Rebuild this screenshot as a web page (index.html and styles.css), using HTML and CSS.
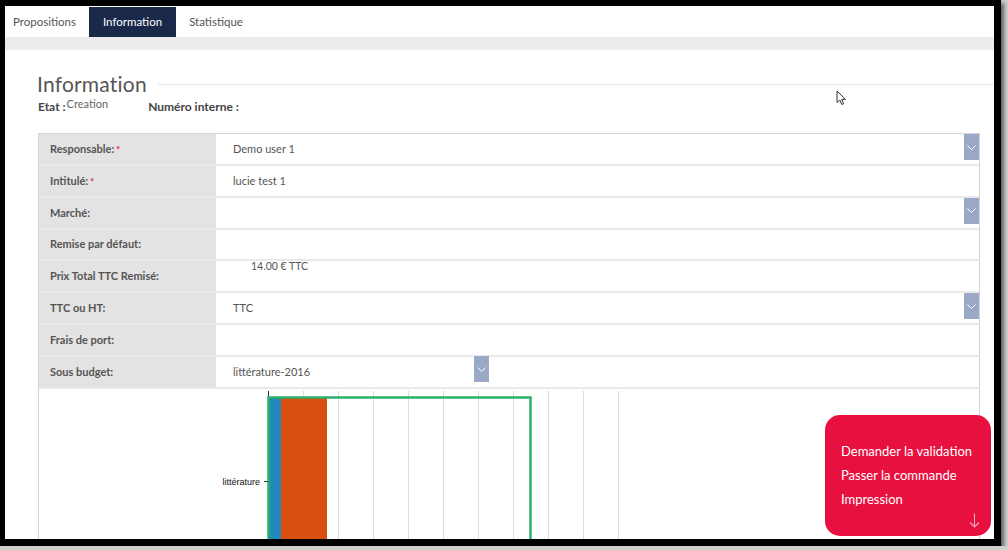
FILE: index.html
```html
<!DOCTYPE html>
<html lang="fr">
<head>
  <meta charset="UTF-8">
  <title>Information</title>
  <link rel="stylesheet" href="styles.css">
</head>
<body>
<div class="frame">
  <div class="page">
    <div class="tabs">
      <div class="tab first">Propositions</div>
      <div class="tab active">Information</div>
      <div class="tab">Statistique</div>
    </div>
    <div class="strip"></div>

    <div class="content">
      <div class="heading">
        <h1>Information</h1>
        <div class="rule"></div>
      </div>
      <div class="meta">
        <strong>Etat :</strong><span class="state">Creation</span>
        <strong class="num">Numéro interne :</strong>
      </div>

      <div class="form-table">
        <div class="row">
          <div class="label">Responsable: <span class="req">*</span></div>
          <div class="value">Demo user 1
            <span class="arrow"><svg width="9" height="5" viewBox="0 0 9 5"><polyline points="0.5,0.5 4.5,4.5 8.5,0.5" fill="none" stroke="#fff" stroke-width="1"/></svg></span>
          </div>
        </div>
        <div class="row">
          <div class="label">Intitulé: <span class="req">*</span></div>
          <div class="value">lucie test 1</div>
        </div>
        <div class="row">
          <div class="label">Marché:</div>
          <div class="value">
            <span class="arrow"><svg width="9" height="5" viewBox="0 0 9 5"><polyline points="0.5,0.5 4.5,4.5 8.5,0.5" fill="none" stroke="#fff" stroke-width="1"/></svg></span>
          </div>
        </div>
        <div class="row">
          <div class="label">Remise par défaut:</div>
          <div class="value"></div>
        </div>
        <div class="row">
          <div class="label">Prix Total TTC Remisé:</div>
          <div class="value top"><span class="price">14.00 € TTC</span></div>
        </div>
        <div class="row">
          <div class="label">TTC ou HT:</div>
          <div class="value">TTC
            <span class="arrow"><svg width="9" height="5" viewBox="0 0 9 5"><polyline points="0.5,0.5 4.5,4.5 8.5,0.5" fill="none" stroke="#fff" stroke-width="1"/></svg></span>
          </div>
        </div>
        <div class="row">
          <div class="label">Frais de port:</div>
          <div class="value"></div>
        </div>
        <div class="row">
          <div class="label">Sous budget:</div>
          <div class="value">
            <div class="small-select">littérature-2016
              <span class="arrow"><svg width="9" height="5" viewBox="0 0 9 5"><polyline points="0.5,0.5 4.5,4.5 8.5,0.5" fill="none" stroke="#fff" stroke-width="1"/></svg></span>
            </div>
          </div>
        </div>

        <div class="chart">
          <svg width="940" height="220" viewBox="0 0 940 220">
            <g stroke="#dcdcdc" stroke-width="1">
              <line x1="264.5" y1="2" x2="264.5" y2="220"/>
              <line x1="299.5" y1="2" x2="299.5" y2="220"/>
              <line x1="334.5" y1="2" x2="334.5" y2="220"/>
              <line x1="369.5" y1="2" x2="369.5" y2="220"/>
              <line x1="404.5" y1="2" x2="404.5" y2="220"/>
              <line x1="439.5" y1="2" x2="439.5" y2="220"/>
              <line x1="474.5" y1="2" x2="474.5" y2="220"/>
              <line x1="509.5" y1="2" x2="509.5" y2="220"/>
              <line x1="544.5" y1="2" x2="544.5" y2="220"/>
              <line x1="579.5" y1="2" x2="579.5" y2="220"/>
            </g>
            <line x1="229.5" y1="2" x2="229.5" y2="220" stroke="#333" stroke-width="1"/>
            <rect x="229" y="9" width="13" height="211" fill="#2389b9"/>
            <rect x="242" y="9" width="46" height="211" fill="#d94f10"/>
            <rect x="229.5" y="8.5" width="262" height="220" fill="none" stroke="#2ab06a" stroke-width="2.5"/>
            <line x1="225" y1="92.5" x2="229" y2="92.5" stroke="#333" stroke-width="1"/>
            <text x="221" y="95.5" text-anchor="end" class="axis-label">littérature</text>
          </svg>
        </div>
      </div>
    </div>

    <svg class="cursor" width="11" height="16" viewBox="0 0 11 16">
      <path d="M1 1 L1 12.5 L3.8 10 L5.8 14.5 L7.6 13.7 L5.7 9.4 L9.5 9.4 Z" fill="#fff" stroke="#333" stroke-width="1" stroke-linejoin="round"/>
    </svg>

    <div class="actions">
      <div class="action">Demander la validation</div>
      <div class="action">Passer la commande</div>
      <div class="action">Impression</div>
      <svg class="down" width="11" height="15" viewBox="0 0 11 15">
        <path d="M5.5 0.5 L5.5 14 M1 9.5 L5.5 14 L10 9.5" fill="none" stroke="#f5a9bc" stroke-width="1.1"/>
      </svg>
    </div>
  </div>
</div>
</body>
</html>
```

FILE: styles.css
```css
* {
  box-sizing: border-box;
}

body {
  margin: 0;
  background-color: #cfcfcf;
  font-family: 'Lato', 'Open Sans', sans-serif;
  color: #555;
}

.frame {
  width: 1001px;
  height: 546px;
  background-color: #000;
  padding: 6px 7px 7px 5px;
  box-shadow: 3px 3px 4px rgba(0, 0, 0, 0.55);
}

.page {
  position: relative;
  width: 989px;
  height: 533px;
  background-color: #fff;
  overflow: hidden;
}

.tabs {
  display: flex;
  height: 31px;
  padding-top: 1px;
}

.tab {
  display: flex;
  align-items: center;
  padding: 0 13px;
  font-size: 11.5px;
  color: #555;
  padding-bottom: 1px;
}

.tab.first {
  padding-left: 8px;
}

.tab.active {
  background-color: #1a2849;
  color: #fff;
  padding: 0 14px 1px;
}

.strip {
  height: 13px;
  background-color: #ececec;
}

.content {
  padding: 22px 14px 0 33px;
}

.heading {
  display: flex;
  align-items: center;
  gap: 11px;
  height: 24px;
  margin-right: -14px;
}

.heading h1 {
  margin: 0 0 0 -1px;
  font-size: 21px;
  font-weight: 400;
  color: #555;
  line-height: 24px;
  letter-spacing: 0.2px;
}

.heading .rule {
  flex: 1;
  height: 1px;
  background-color: #e6e6e6;
}

.meta {
  margin-top: 4px;
  height: 14px;
  font-size: 12px;
  line-height: 14px;
  color: #444;
}

.meta strong {
  font-weight: 700;
}

.meta .state {
  font-size: 11px;
  color: #666;
  position: relative;
  top: -3px;
  margin-left: 1px;
}

.meta .num {
  margin-left: 37px;
}

.form-table {
  margin-top: 19px;
  border: 1px solid #d4d4d4;
  border-bottom: none;
}

.row {
  display: flex;
  height: 31.85px;
  border-bottom: 2px solid #e9e9e9;
}

.label {
  width: 177px;
  flex-shrink: 0;
  background-color: #e3e3e3;
  padding-left: 11px;
  padding-bottom: 1px;
  display: flex;
  align-items: center;
  font-size: 11px;
  font-weight: 700;
  color: #555;
}

.req {
  color: #e8103e;
  font-size: 9px;
  margin-left: 2px;
  align-self: flex-start;
  margin-top: 10px;
}

.value {
  flex: 1;
  position: relative;
  display: flex;
  align-items: center;
  padding-left: 17px;
  padding-bottom: 1px;
  font-size: 11px;
  color: #555;
}

.value.top {
  align-items: flex-start;
}

.price {
  font-size: 10.5px;
  margin-left: 18px;
  margin-top: -1px;
}

.arrow {
  position: absolute;
  top: 0;
  right: 0;
  width: 15px;
  height: 26px;
  background-color: #9ba9c9;
  display: flex;
  align-items: center;
  justify-content: center;
}

.small-select {
  position: relative;
  width: 273px;
  height: 30px;
  margin-left: -17px;
  padding-left: 17px;
  display: flex;
  align-items: center;
}

.chart {
  height: 220px;
}

.chart svg {
  display: block;
}

.axis-label {
  font-family: 'Liberation Sans', Arial, sans-serif;
  font-size: 9px;
  fill: #111;
}

.cursor {
  position: absolute;
  left: 831px;
  top: 84px;
}

.actions {
  position: absolute;
  left: 820px;
  top: 409px;
  width: 166px;
  height: 121px;
  background-color: #e8103e;
  border-radius: 15px;
  padding: 24px 0 0 16px;
}

.action {
  color: #fff;
  font-size: 13px;
  line-height: 24px;
}

.down {
  position: absolute;
  left: 144px;
  top: 98px;
}
```
